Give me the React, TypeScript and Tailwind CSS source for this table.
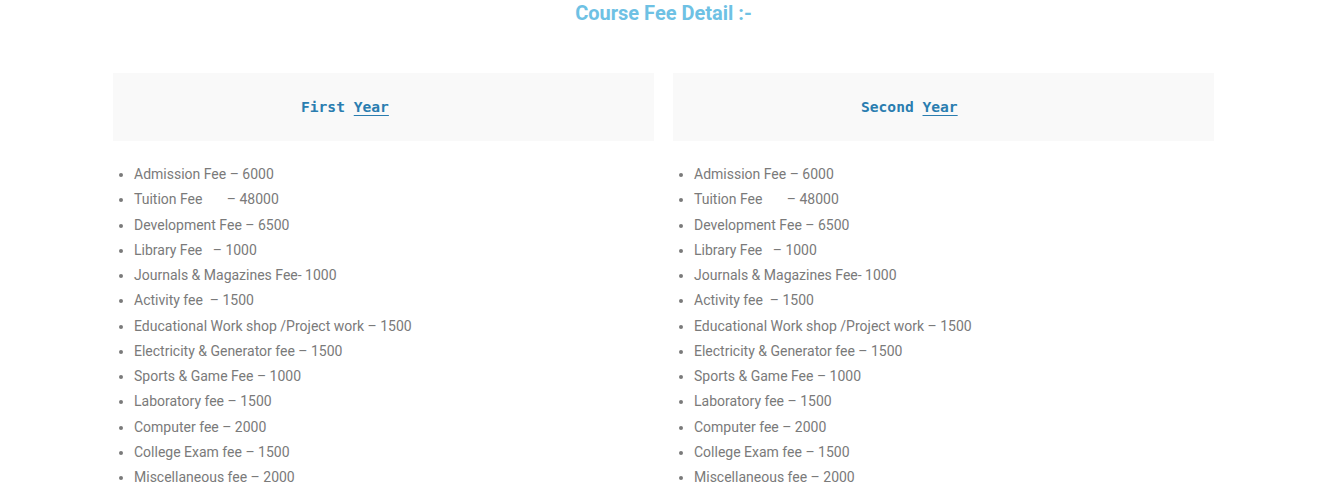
const fees = [
  "Admission Fee – 6000",
  "Tuition Fee       – 48000",
  "Development Fee – 6500",
  "Library Fee   – 1000",
  "Journals & Magazines Fee- 1000",
  "Activity fee  – 1500",
  "Educational Work shop /Project work – 1500",
  "Electricity & Generator fee – 1500",
  "Sports & Game Fee – 1000",
  "Laboratory fee – 1500",
  "Computer fee – 2000",
  "College Exam fee – 1500",
  "Miscellaneous fee – 2000",
];

function YearColumn({ label }: { label: string }) {
  return (
    <div className="w-[541px]">
      <div className="h-[68px] bg-[#f9f9f9] flex items-center pl-[188px]">
        <p className="font-['DejaVu_Sans_Mono',monospace] font-bold text-[14.6px] text-[#2a7db0]">
          {label} <span className="underline underline-offset-[3px]">Year</span>
        </p>
      </div>
      <ul className="list-disc pl-[21px] mt-[21px] font-['Roboto',sans-serif] text-[14px] leading-[25.25px] text-[#7a7a7a]">
        {fees.map((fee) => (
          <li key={fee} className="whitespace-pre">
            {fee}
          </li>
        ))}
      </ul>
    </div>
  );
}

export default function App() {
  return (
    <div className="w-[1327px] h-[502px] bg-white overflow-hidden">
      <h2 className="pt-px text-center font-['Roboto',sans-serif] font-bold text-[20px] leading-[24px] text-[#6ec1e4]">
        Course Fee Detail :-
      </h2>
      <div className="mt-[48px] pl-[113px] flex gap-[19px]">
        <YearColumn label="First" />
        <YearColumn label="Second" />
      </div>
    </div>
  );
}
